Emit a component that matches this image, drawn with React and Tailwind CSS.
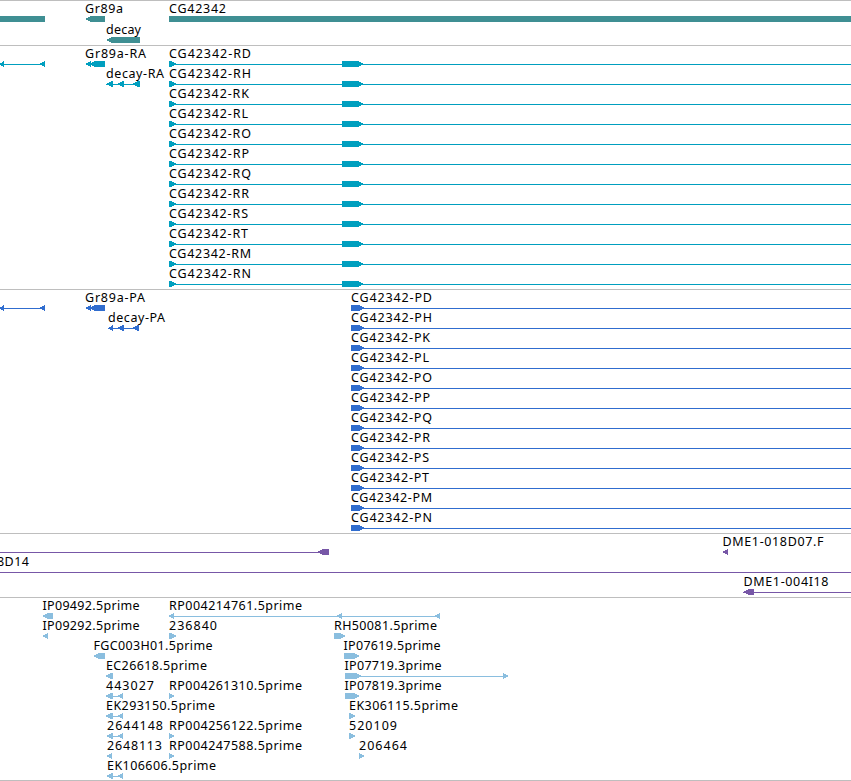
import React from 'react';

const transcripts = [
  ['RD', 82], ['RH', 82], ['RK', 80], ['RL', 79], ['RO', 82], ['RP', 80],
  ['RQ', 82], ['RR', 80], ['RS', 79], ['RT', 79], ['RM', 82], ['RN', 82]
];

const proteins = [
  ['PD', 81], ['PH', 81], ['PK', 79], ['PL', 78], ['PO', 81], ['PP', 79],
  ['PQ', 81], ['PR', 79], ['PS', 78], ['PT', 78], ['PM', 81], ['PN', 81]
];

// exons are [start, end, direction], direction is -1, 0 or 1
const tracks = [
  {
    name: 'Genes',
    color: '#3f8f93',
    height: 45,
    pitch: 21,
    features: [
      { row: 0, exons: [[-10, 45, 0]] },
      { row: 0, label: 'Gr89a', x: 85, width: 38, exons: [[85, 105, -1]] },
      { row: 1, label: 'decay', x: 106, width: 35, exons: [[106, 140, -1]] },
      { row: 0, label: 'CG42342', x: 169, width: 57, exons: [[169, 860, 0]] }
    ]
  },
  {
    name: 'Transcripts',
    color: '#009fbf',
    height: 244,
    pitch: 20,
    features: [
      { row: 0, line: [0, 45], exons: [[-1, 4, -1], [39, 45, -1]] },
      { row: 0, label: 'Gr89a-RA', x: 85, width: 61, exons: [[85, 91, -1], [89, 105, -1]] },
      { row: 1, label: 'decay-RA', x: 106, width: 58, line: [106, 140], exons: [[106, 113, -1], [117, 124, -1], [132, 140, -1]] },
      ...transcripts.map(([id, width], row) => ({
        row, label: `CG42342-${id}`, x: 169, width, line: [169, 851], exons: [[169, 177, 1], [342, 364, 1]]
      }))
    ]
  },
  {
    name: 'Proteins',
    color: '#306dcf',
    height: 244,
    pitch: 20,
    features: [
      { row: 0, line: [0, 45], exons: [[-1, 4, -1], [39, 45, -1]] },
      { row: 0, label: 'Gr89a-PA', x: 85, width: 60, exons: [[85, 91, -1], [89, 105, -1]] },
      { row: 1, label: 'decay-PA', x: 108, width: 57, line: [108, 139], exons: [[108, 113, -1], [117, 124, -1], [132, 139, -1]] },
      ...proteins.map(([id, width], row) => ({
        row, label: `CG42342-${id}`, x: 351, width, line: [351, 851], exons: [[351, 365, 1]]
      }))
    ]
  },
  {
    name: 'BACs',
    color: '#7757a7',
    height: 64,
    pitch: 20,
    features: [
      { row: 0, line: [0, 329], exons: [[317, 329, -1]] },
      { row: 0, label: 'DME1-018D07.F', x: 722.5, width: 101, exons: [[722, 728, -1]] },
      { row: 1, label: '8D14', x: -3, width: 32, line: [0, 851] },
      { row: 2, label: 'DME1-004I18', x: 743.5, width: 85, line: [743, 851], exons: [[743, 754, -1]] }
    ]
  },
  {
    name: 'ESTs',
    color: '#8abedf',
    height: 183,
    pitch: 20,
    features: [
      { row: 0, label: 'IP09492.5prime', x: 42.5, width: 97, exons: [[42, 53, -1]] },
      { row: 0, label: 'RP004214761.5prime', x: 169, width: 133, line: [169, 440], exons: [[168, 174, -1], [336, 342, -1], [434, 440, -1]] },
      { row: 1, label: 'IP09292.5prime', x: 42.5, width: 97, exons: [[42, 48, -1]] },
      { row: 1, label: '236840', x: 169, width: 48, exons: [[169, 177, 1]] },
      { row: 1, label: 'RH50081.5prime', x: 334, width: 103, exons: [[334, 346, 1]] },
      { row: 2, label: 'FGC003H01.5prime', x: 93.5, width: 119, exons: [[93, 105, -1]] },
      { row: 2, label: 'IP07619.5prime', x: 343.5, width: 97, exons: [[344, 360, 1]] },
      { row: 3, label: 'EC26618.5prime', x: 106, width: 101, exons: [[105, 113, -1]] },
      { row: 3, label: 'IP07719.3prime', x: 344.5, width: 97, line: [345, 508], exons: [[345, 362, 1], [503, 509, 1]] },
      { row: 4, label: '443027', x: 106, width: 48, line: [106, 123], exons: [[105, 113, -1], [117, 123, -1]] },
      { row: 4, label: 'RP004261310.5prime', x: 169, width: 133, exons: [[169, 175, 1]] },
      { row: 4, label: 'IP07819.3prime', x: 344.5, width: 97, exons: [[345, 360, 1]] },
      { row: 5, label: 'EK293150.5prime', x: 106, width: 109, line: [106, 123], exons: [[105, 113, -1], [117, 123, -1]] },
      { row: 5, label: 'EK306115.5prime', x: 349, width: 109, exons: [[349, 356, 1]] },
      { row: 6, label: '2644148', x: 107, width: 56, line: [107, 123], exons: [[106, 113, -1], [117, 123, -1]] },
      { row: 6, label: 'RP004256122.5prime', x: 169, width: 133, exons: [[169, 175, 1]] },
      { row: 6, label: '520109', x: 349, width: 48, exons: [[349, 356, 1]] },
      { row: 7, label: '2648113', x: 107, width: 55, exons: [[106, 112, -1]] },
      { row: 7, label: 'RP004247588.5prime', x: 169, width: 133, exons: [[169, 175, 1]] },
      { row: 7, label: '206464', x: 359, width: 48, exons: [[359, 365, 1]] },
      { row: 8, label: 'EK106606.5prime', x: 107, width: 109, line: [107, 123], exons: [[106, 113, -1], [117, 123, -1]] }
    ]
  }
];

function Exon({ start, end, dir }) {
  if (dir === 0) {
    return <rect x={start} y="15" width={end - start} height="6" />;
  }
  const tip = Math.min(6, end - start);
  const points = dir < 0
    ? `${start},18.2 ${start + tip},15 ${end},15 ${end},21 ${start + tip},21`
    : `${end},18.2 ${end - tip},15 ${start},15 ${start},21 ${end - tip},21`;
  return <polygon points={points} shapeRendering="crispEdges" />;
}

function Feature({ feature, pitch }) {
  const { row, label, x, width, line, exons = [] } = feature;
  return (
    <g transform={`translate(0 ${row * pitch})`}>
      {line && <rect x={line[0]} y="18" width={line[1] - line[0]} height="1" shapeRendering="crispEdges" />}
      {exons.map(([start, end, dir]) => (
        <Exon key={start} start={start} end={end} dir={dir} />
      ))}
      {label && (
        <text x={x} y="12" textLength={width} className="fill-black">
          {label}
        </text>
      )}
    </g>
  );
}

function Track({ track }) {
  return (
    <section className="w-full border-t border-[#bebebe]" aria-label={track.name}>
      <svg
        className="block w-full font-['Noto_Sans',sans-serif] text-[12.5px]"
        height={track.height - 1}
        fill={track.color}
      >
        {track.features.map((feature, idx) => (
          <Feature key={idx} feature={feature} pitch={track.pitch} />
        ))}
      </svg>
    </section>
  );
}

export default function App() {
  return (
    <main className="flex flex-col w-full h-[781px] overflow-hidden bg-white border-b border-[#bebebe]">
      {tracks.map((track) => (
        <Track key={track.name} track={track} />
      ))}
    </main>
  );
}
